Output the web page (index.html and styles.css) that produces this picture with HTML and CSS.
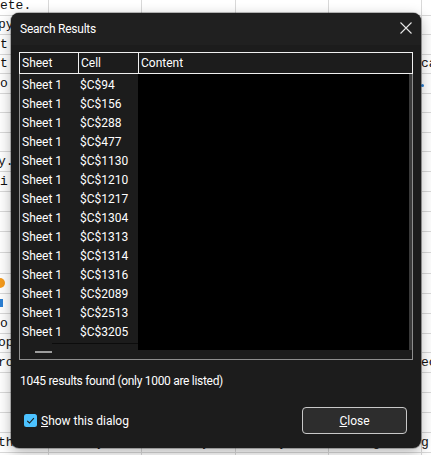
FILE: index.html
```html
<!DOCTYPE html>
<html>
<head>
<meta charset="utf-8">
<link rel="stylesheet" href="styles.css">
</head>
<body>
<div class="sheet">
  <div class="srow h19"><span class="l">ete.</span><span class="r"></span></div>
  <div class="srow h19"><span class="l sh">py</span><span class="r"></span></div>
  <div class="srow"><span class="l">t</span><span class="r"></span></div>
  <div class="srow h19"><span class="l">t</span><span class="r">ca</span></div>
  <div class="srow"><span class="l">o</span><span class="r"><i class="bdot"></i></span></div>
  <div class="srow h19"><span class="l"></span><span class="r"></span></div>
  <div class="srow"><span class="l"></span><span class="r"></span></div>
  <div class="srow h19"><span class="l"></span><span class="r"></span></div>
  <div class="srow"><span class="l sh">y.</span><span class="r"></span></div>
  <div class="srow"><span class="l">i</span><span class="r"></span></div>
  <div class="srow"><span class="l"></span><span class="r"></span></div>
  <div class="srow"><span class="l"></span><span class="r"></span></div>
  <div class="srow h21"><span class="l"></span><span class="r"></span></div>
  <div class="srow h21"><span class="l"></span><span class="r"></span></div>
  <div class="srow"><span class="l"><i class="odot"></i></span><span class="r"></span></div>
  <div class="srow"><span class="l"><i class="bmark"></i></span><span class="r"></span></div>
  <div class="srow"><span class="l">o</span><span class="r"></span></div>
  <div class="srow h19"><span class="l sh">op</span><span class="r"></span></div>
  <div class="srow"><span class="l sh">ro</span><span class="r">ec</span></div>
  <div class="srow"><span class="l"></span><span class="r"></span></div>
  <div class="srow"><span class="l"></span><span class="r"></span></div>
  <div class="srow"><span class="l"></span><span class="r"></span></div>
  <div class="srow lastrow"><span class="l sh">th</span><span class="w w1">fully</span><span class="w w2">sway</span><span class="w w3">easy</span><span class="w w4">long</span><span class="r">g</span></div>
  <div class="srow"><span class="l"></span><span class="r"></span></div>
</div>

<div class="dialog">
  <div class="titlebar">
    <span class="title">Search Results</span>
    <svg class="xicon" width="12" height="12" viewBox="0 0 12 12"><path d="M0.5 0.5 L11.5 11.5 M11.5 0.5 L0.5 11.5" stroke="#e6e6e6" stroke-width="1.1" fill="none"/></svg>
  </div>
  <div class="body">
    <div class="frame">
      <div class="head">
        <div class="hc c1">Sheet</div>
        <div class="hc c2">Cell</div>
        <div class="hc c3">Content</div>
      </div>
      <div class="list">
        <div class="left">
          <div class="row"><span class="c1">Sheet 1</span><span class="c2">$C$94</span></div>
          <div class="row"><span class="c1">Sheet 1</span><span class="c2">$C$156</span></div>
          <div class="row"><span class="c1">Sheet 1</span><span class="c2">$C$288</span></div>
          <div class="row"><span class="c1">Sheet 1</span><span class="c2">$C$477</span></div>
          <div class="row"><span class="c1">Sheet 1</span><span class="c2">$C$1130</span></div>
          <div class="row"><span class="c1">Sheet 1</span><span class="c2">$C$1210</span></div>
          <div class="row"><span class="c1">Sheet 1</span><span class="c2">$C$1217</span></div>
          <div class="row"><span class="c1">Sheet 1</span><span class="c2">$C$1304</span></div>
          <div class="row"><span class="c1">Sheet 1</span><span class="c2">$C$1313</span></div>
          <div class="row"><span class="c1">Sheet 1</span><span class="c2">$C$1314</span></div>
          <div class="row"><span class="c1">Sheet 1</span><span class="c2">$C$1316</span></div>
          <div class="row"><span class="c1">Sheet 1</span><span class="c2">$C$2089</span></div>
          <div class="row"><span class="c1">Sheet 1</span><span class="c2">$C$2513</span></div>
          <div class="row"><span class="c1">Sheet 1</span><span class="c2">$C$3205</span></div>
          <div class="tail"><span class="tline"></span></div>
        </div>
        <div class="black"></div>
        <div class="vscroll"></div>
      </div>
      <div class="hscroll"><span class="thumb"></span></div>
    </div>
    <div class="status">1045 results found (only 1000 are listed)</div>
    <div class="footer">
      <label class="check">
        <svg class="box" width="13" height="13" viewBox="0 0 13 13"><rect x="0" y="0" width="13" height="13" rx="2.5" fill="#4cc2ff"/><path d="M3.2 6.8 L5.5 9 L9.9 4.2" stroke="#1a1a1a" stroke-width="1.1" fill="none"/></svg>
        <span><u>S</u>how this dialog</span>
      </label>
      <button class="btn"><u>C</u>lose</button>
    </div>
  </div>
</div>
</body>
</html>
```

FILE: styles.css
```css
html, body {
  margin: 0;
  padding: 0;
}
body {
  width: 431px;
  height: 455px;
  overflow: hidden;
  background: #ffffff;
  position: relative;
  font-family: Roboto, "Noto Sans", sans-serif;
}

/* spreadsheet behind */
.sheet {
  display: flex;
  flex-direction: column;
  margin-top: -3px;
  background-image:
    linear-gradient(#d9d9d9, #d9d9d9),
    linear-gradient(#d9d9d9, #d9d9d9),
    linear-gradient(#d9d9d9, #d9d9d9),
    linear-gradient(#d9d9d9, #d9d9d9),
    linear-gradient(#d9d9d9, #d9d9d9);
  background-size: 1px 100%;
  background-repeat: no-repeat;
  background-position: 48px 0, 141px 0, 235px 0, 328px 0, 421px 0;
}
.srow {
  height: 20px;
  flex-shrink: 0;
  box-sizing: border-box;
  border-bottom: 1px solid #d9d9d9;
  display: flex;
  justify-content: space-between;
  align-items: center;
  font-family: "Liberation Mono", monospace;
  font-size: 13px;
  color: #111;
  line-height: 18px;
}
.srow.h19 {
  height: 19px;
}
.srow.h21 {
  height: 21px;
}
.srow .l {
  padding-left: 0;
}
.srow .l.sh {
  margin-left: -2px;
}
.srow .r {
  width: 10px;
  white-space: nowrap;
}
.lastrow {
  justify-content: flex-start;
}
.lastrow .w {
  white-space: nowrap;
}
.lastrow .w1 { margin-left: 52px; }
.lastrow .w2 { margin-left: 74px; }
.lastrow .w3 { margin-left: 46px; }
.lastrow .w4 { margin-left: 62px; }
.lastrow .r { margin-left: auto; }
.bdot {
  display: inline-block;
  width: 3px;
  height: 3px;
  background: #2a7fd4;
  border-radius: 50%;
}
.odot {
  display: inline-block;
  width: 6px;
  height: 10px;
  margin-left: -1px;
  background: #f59a1b;
  border-radius: 0 6px 6px 0;
  vertical-align: middle;
}
.bmark {
  display: inline-block;
  width: 3px;
  height: 8px;
  background: #2a7fd4;
  vertical-align: middle;
}

/* dialog */
.dialog {
  position: absolute;
  left: 11px;
  top: 13px;
  width: 410px;
  height: 435px;
  box-sizing: border-box;
  border-radius: 8px;
  background: #1c1c1c;
  overflow: hidden;
  box-shadow: 0 0 0 1px rgba(0,0,0,0.25), 0 4px 14px rgba(0,0,0,0.3);
  color: #ffffff;
  font-size: 12px;
}
.titlebar {
  height: 32px;
  background: #202020;
  display: flex;
  align-items: center;
  justify-content: space-between;
  padding: 0 9px 0 9px;
}
.title {
  font-size: 12px;
  letter-spacing: -0.25px;
  color: #ffffff;
}
.xicon {
  display: block;
  margin-top: -2px;
}
.body {
  padding: 7px 8px 0 8px;
}
.frame {
  width: 394px;
  height: 308px;
  box-sizing: border-box;
  border: 1px solid #8e8e8e;
  display: flex;
  flex-direction: column;
}
.head {
  margin: -1px -1px 0 -1px;
  height: 22px;
  box-sizing: border-box;
  border: 1px solid #f0f0f0;
  display: flex;
  background: #1c1c1c;
}
.hc {
  line-height: 20px;
  padding-left: 2px;
  box-sizing: border-box;
}
.head .c1 {
  width: 59px;
  border-right: 1px solid #f0f0f0;
}
.head .c2 {
  width: 60px;
  border-right: 1px solid #f0f0f0;
  padding-left: 2px;
}
.head .c3 {
  flex: 1;
  padding-left: 2px;
}
.list {
  height: 276px;
  display: flex;
}
.left {
  width: 118px;
  padding-top: 2px;
  display: flex;
  flex-direction: column;
  background: #1c1c1c;
}
.row {
  height: 19px;
  line-height: 19px;
  display: flex;
  white-space: nowrap;
}
.row .c1 {
  width: 58px;
  padding-left: 2px;
  box-sizing: border-box;
}
.row .c2 {
  padding-left: 2px;
}
.tail {
  flex: 1;
}
.tline {
  display: block;
  margin: 1px 0 0 32px;
  height: 1px;
  background: #0c0c0c;
}
.black {
  flex: 1;
  background: #000000;
}
.vscroll {
  width: 3px;
  background: #3a3a3a;
}
.hscroll {
  flex: 1;
  padding: 1px 0 0 15px;
}
.thumb {
  display: block;
  width: 17px;
  height: 2px;
  background: #9d9d9d;
}
.status {
  margin-top: 14px;
  padding-left: 1px;
  line-height: 14px;
  letter-spacing: -0.3px;
}
.footer {
  margin-top: 19px;
  display: flex;
  justify-content: space-between;
  align-items: center;
  padding: 0 6px 0 5px;
}
.check {
  display: flex;
  align-items: center;
  gap: 4px;
}
.box {
  display: block;
}
.btn {
  width: 105px;
  height: 27px;
  box-sizing: border-box;
  border: 1px solid #c8c8c8;
  border-radius: 4px;
  background: #2d2d2d;
  color: #ffffff;
  font-family: Roboto, "Noto Sans", sans-serif;
  font-size: 12px;
  padding: 0;
}
```
